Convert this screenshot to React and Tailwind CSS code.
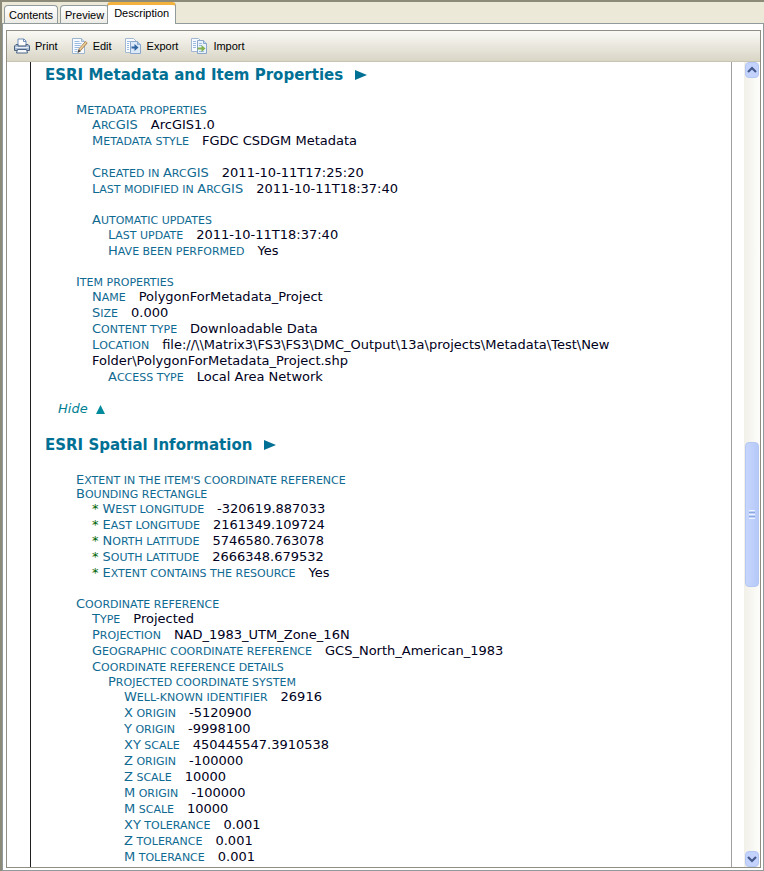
const SANS = "font-['Liberation_Sans',Arial,sans-serif]";
const VERDANA = "font-['DejaVu_Sans',Verdana,sans-serif]";

function Tab({ active, children }) {
  return active ? (
    <button
      type="button"
      role="tab"
      aria-selected="true"
      className="relative -mb-px -ml-1 h-[22px] rounded-t-sm border border-b-0 border-t-[3px] border-[#919b9c] border-t-[#f3b23e] bg-white px-1.5 pb-1 leading-[14px]"
    >
      {children}
    </button>
  ) : (
    <button
      type="button"
      role="tab"
      aria-selected="false"
      className="h-[18px] rounded-t-sm border border-b-0 border-[#919b9c] bg-linear-to-b from-white to-[#ecebe6] px-1 leading-[16px]"
    >
      {children}
    </button>
  );
}

function PrintIcon() {
  return (
    <svg width="18" height="18" viewBox="0 0 18 18" fill="none" aria-hidden="true">
      <path d="M5 8V2h6l2 2v4" fill="#fff" stroke="#6f8fb8" />
      <path d="M10.500 2v2.500H13" stroke="#6f8fb8" />
      <path d="M3 7.500h2v1.500h8v-1.500h2l1.500 1.500v4.500h-15V9z" fill="#a9bbd2" stroke="#4c6484" />
      <path d="M2.500 10.500h13" stroke="#e9f0f8" />
      <path d="M4.500 12.500h9l1 3.500h-11z" fill="#f4f8fc" stroke="#4c6484" />
    </svg>
  );
}

function EditIcon() {
  return (
    <svg width="18" height="18" viewBox="0 0 18 18" fill="none" aria-hidden="true">
      <path d="M1.500 1.500h9l3 3v12h-12z" fill="#f7fbff" stroke="#9db4ce" />
      <path d="M10.500 1.500v3h3" fill="#cfe0f2" stroke="#9db4ce" />
      <path d="M3.500 4.500h5M3.500 6.500h7M3.500 8.500h6M3.500 10.500h5M3.500 12.500h3M3.500 14.500h3" stroke="#9bbbe0" />
      <path d="M15.500 5l-7 8" stroke="#a07c50" strokeWidth="3" />
      <path d="M15.200 5.200l-6.500 7.400" stroke="#efcf98" strokeWidth="1.600" />
      <path d="M7.400 12.200l-.9 3.800 3.400-1.800z" fill="#4a4038" />
    </svg>
  );
}

function ExportIcon() {
  return (
    <svg width="18" height="18" viewBox="0 0 18 18" fill="none" aria-hidden="true">
      <path d="M.5 1.500h8l3 3v11H.5z" fill="#f7fbff" stroke="#a3b9d3" />
      <path d="M2 4.500h3M2 6.500h2M2 8.500h2M2 10.500h2M2 12.500h2" stroke="#9bbbe0" />
      <path d="M5.500 4.500h7l3 3v9h-10z" fill="#dbe9f9" stroke="#8aa6cb" />
      <path d="M12.500 4.500v3h3" fill="#a9c6ea" stroke="#8aa6cb" />
      <path d="M6.500 9.500h3V7l4 3.500-4 3.500v-2.500h-3z" fill="#2f649f" />
    </svg>
  );
}

function ImportIcon() {
  return (
    <svg width="18" height="18" viewBox="0 0 18 18" fill="none" aria-hidden="true">
      <path d="M.5 1.500h7l2 2v11h-9z" fill="#f7fbff" stroke="#a3b9d3" />
      <path d="M2 4.500h3M2 6.500h3M2 8.500h3M2 10.500h3" stroke="#9bbbe0" />
      <path d="M6.500 3.500h6l3 3v10h-9z" fill="#eaf2fb" stroke="#8aa6cb" />
      <path d="M12.500 3.500v3h3" fill="#c3d8f0" stroke="#8aa6cb" />
      <path d="M8 6.500h3M8 8.500h3M8 14.500h5" stroke="#9bbbe0" />
      <path d="M6.500 10.500h4V8l4 3.500-4 3.500v-2.500h-4z" fill="#84b24f" />
    </svg>
  );
}

const TOOLS = [
  ["Print", PrintIcon],
  ["Edit", EditIcon],
  ["Export", ExportIcon],
  ["Import", ImportIcon],
];

// Small capitals: capitals keep the full size, the rest is set as smaller capitals.
function SmallCaps({ text }) {
  return text.split(/([A-Z]+)/).map((part, i) =>
    i % 2 ? part : <span key={i} className="text-[11px] leading-none uppercase">{part}</span>
  );
}

function Row({ label, star, children }) {
  return (
    <div className="text-[13px] leading-4 text-[#000020]">
      {star && <span className="mr-1 text-[#006400]">*</span>}
      <dt className="mr-[13px] inline text-[#0f6a92]">
        <SmallCaps text={label} />
      </dt>
      <dd className="inline">{children}</dd>
    </div>
  );
}

function GroupTitle({ children }) {
  return (
    <h3 className="text-[13px] leading-[14px] text-[#0f6a92]">
      <SmallCaps text={children} />
    </h3>
  );
}

function Group({ title, children, className = "" }) {
  return (
    <section className={className}>
      <GroupTitle>{title}</GroupTitle>
      <dl className="pl-4">{children}</dl>
    </section>
  );
}

function Heading({ children }) {
  return (
    <h2 className="flex items-center gap-3 text-[15px] leading-5 font-bold text-[#007094]">
      {children}
      <svg width="12" height="10" viewBox="0 0 12 10" aria-hidden="true">
        <path d="M0 0l12 5-12 5z" fill="#007094" />
      </svg>
    </h2>
  );
}

const PARAMETERS = [
  ["Well-known identifier", "26916"],
  ["X origin", "-5120900"],
  ["Y origin", "-9998100"],
  ["XY scale", "450445547.3910538"],
  ["Z origin", "-100000"],
  ["Z scale", "10000"],
  ["M origin", "-100000"],
  ["M scale", "10000"],
  ["XY tolerance", "0.001"],
  ["Z tolerance", "0.001"],
  ["M tolerance", "0.001"],
];

function ScrollButton({ label, d }) {
  return (
    <button
      type="button"
      aria-label={label}
      className="flex h-4 w-full shrink-0 items-center justify-center rounded-sm border border-[#b4c6f2] bg-[#c3d3fd]"
    >
      <svg width="10" height="8" viewBox="0 0 10 8" fill="none" aria-hidden="true">
        <path d={d} stroke="#445a8c" strokeWidth="2.200" />
      </svg>
    </button>
  );
}

export default function App() {
  return (
    <div className={`flex h-screen flex-col overflow-hidden border-t-2 border-l-2 border-[#8c8a78] bg-[#ece9d8] text-[11px] text-black ${SANS}`}>
      <div role="tablist" className="flex items-end gap-0.5 pl-0.5">
        <Tab>Contents</Tab>
        <Tab>Preview</Tab>
        <Tab active>Description</Tab>
      </div>
      <div className="flex min-h-0 flex-1 flex-col border border-[#919b9c] bg-white pt-1.5 pr-0.5 pb-0.5 pl-[3px]">
        <div className="flex min-h-0 flex-1 flex-col border border-[#8f8f84]">
          <div className="flex h-[31px] shrink-0 items-center gap-[13px] border-b border-[#c8c5b2] bg-linear-to-b from-[#faf9f5] to-[#d9d6c6] px-1.5">
            {TOOLS.map(([name, Icon]) => (
              <button key={name} type="button" className="flex items-center gap-1">
                <Icon />
                {name}
              </button>
            ))}
          </div>
          <div className="flex min-h-0 flex-1">
            <main className={`ml-[23px] min-w-0 flex-1 overflow-hidden border-r border-l border-r-[#a0a0a0] border-l-[#202020] bg-white pl-3.5 ${VERDANA}`}>
              <div className="pt-[3px]">
                <Heading>ESRI Metadata and Item Properties</Heading>
                <div className="pt-[18px] pl-[31px]">
                  <Group title="Metadata properties">
                    <Row label="ArcGIS">ArcGIS1.0</Row>
                    <Row label="Metadata style">FGDC CSDGM Metadata</Row>
                    <div className="pt-4">
                      <Row label="Created in ArcGIS">2011-10-11T17:25:20</Row>
                      <Row label="Last modified in ArcGIS">2011-10-11T18:37:40</Row>
                    </div>
                    <Group title="Automatic updates" className="pt-4">
                      <Row label="Last update">2011-10-11T18:37:40</Row>
                      <Row label="Have been performed">Yes</Row>
                    </Group>
                  </Group>
                  <Group title="Item properties" className="pt-4">
                    <Row label="Name">PolygonForMetadata_Project</Row>
                    <Row label="Size">0.000</Row>
                    <Row label="Content type">Downloadable Data</Row>
                    <Row label="Location">
                      file://\\Matrix3\FS3\FS3\DMC_Output\13a\projects\Metadata\Test\New
                      <br />
                      Folder\PolygonForMetadata_Project.shp
                    </Row>
                    <div className="pl-4">
                      <Row label="Access type">Local Area Network</Row>
                    </div>
                  </Group>
                </div>
                <a href="#top" className="mt-4 ml-[13px] flex items-center gap-2 text-[13px] leading-4 text-[#007f94] italic">
                  Hide
                  <svg width="9" height="9" viewBox="0 0 9 9" aria-hidden="true">
                    <path d="M0 9l4.500-9L9 9z" fill="#008a9c" />
                  </svg>
                </a>
              </div>
              <div className="pt-[18px]">
                <Heading>ESRI Spatial Information</Heading>
                <div className="pt-[18px] pl-[31px]">
                  <GroupTitle>Extent in the item's coordinate reference</GroupTitle>
                  <Group title="Bounding rectangle">
                    <Row star label="West longitude">-320619.887033</Row>
                    <Row star label="East longitude">2161349.109724</Row>
                    <Row star label="North latitude">5746580.763078</Row>
                    <Row star label="South latitude">2666348.679532</Row>
                    <Row star label="Extent contains the resource">Yes</Row>
                  </Group>
                  <Group title="Coordinate reference" className="pt-4">
                    <Row label="Type">Projected</Row>
                    <Row label="Projection">NAD_1983_UTM_Zone_16N</Row>
                    <Row label="Geographic coordinate reference">GCS_North_American_1983</Row>
                    <Group title="Coordinate reference details" className="py-px">
                      <Group title="Projected coordinate system" className="pt-px">
                        {PARAMETERS.map(([label, value]) => (
                          <Row key={label} label={label}>{value}</Row>
                        ))}
                      </Group>
                    </Group>
                  </Group>
                </div>
              </div>
            </main>
            <div className="ml-3 flex w-4 shrink-0 flex-col bg-linear-to-r from-[#f1f0e8] to-[#fdfdfb] px-px">
              <ScrollButton label="Scroll up" d="M1 6l4-4 4 4" />
              <div className="flex-[364]" />
              <div className="flex flex-[143] flex-col items-center justify-center gap-px rounded-sm border border-[#b4c6f2] bg-linear-to-r from-[#c6d6fd] to-[#b6c9f8]">
                <span className="h-px w-1.5 bg-[#eef4fe]" />
                <span className="h-px w-1.5 bg-[#8ca8e0]" />
                <span className="h-px w-1.5 bg-[#eef4fe]" />
                <span className="h-px w-1.5 bg-[#8ca8e0]" />
                <span className="h-px w-1.5 bg-[#eef4fe]" />
              </div>
              <div className="flex-[264]" />
              <ScrollButton label="Scroll down" d="M1 2l4 4 4-4" />
            </div>
          </div>
        </div>
      </div>
    </div>
  );
}
